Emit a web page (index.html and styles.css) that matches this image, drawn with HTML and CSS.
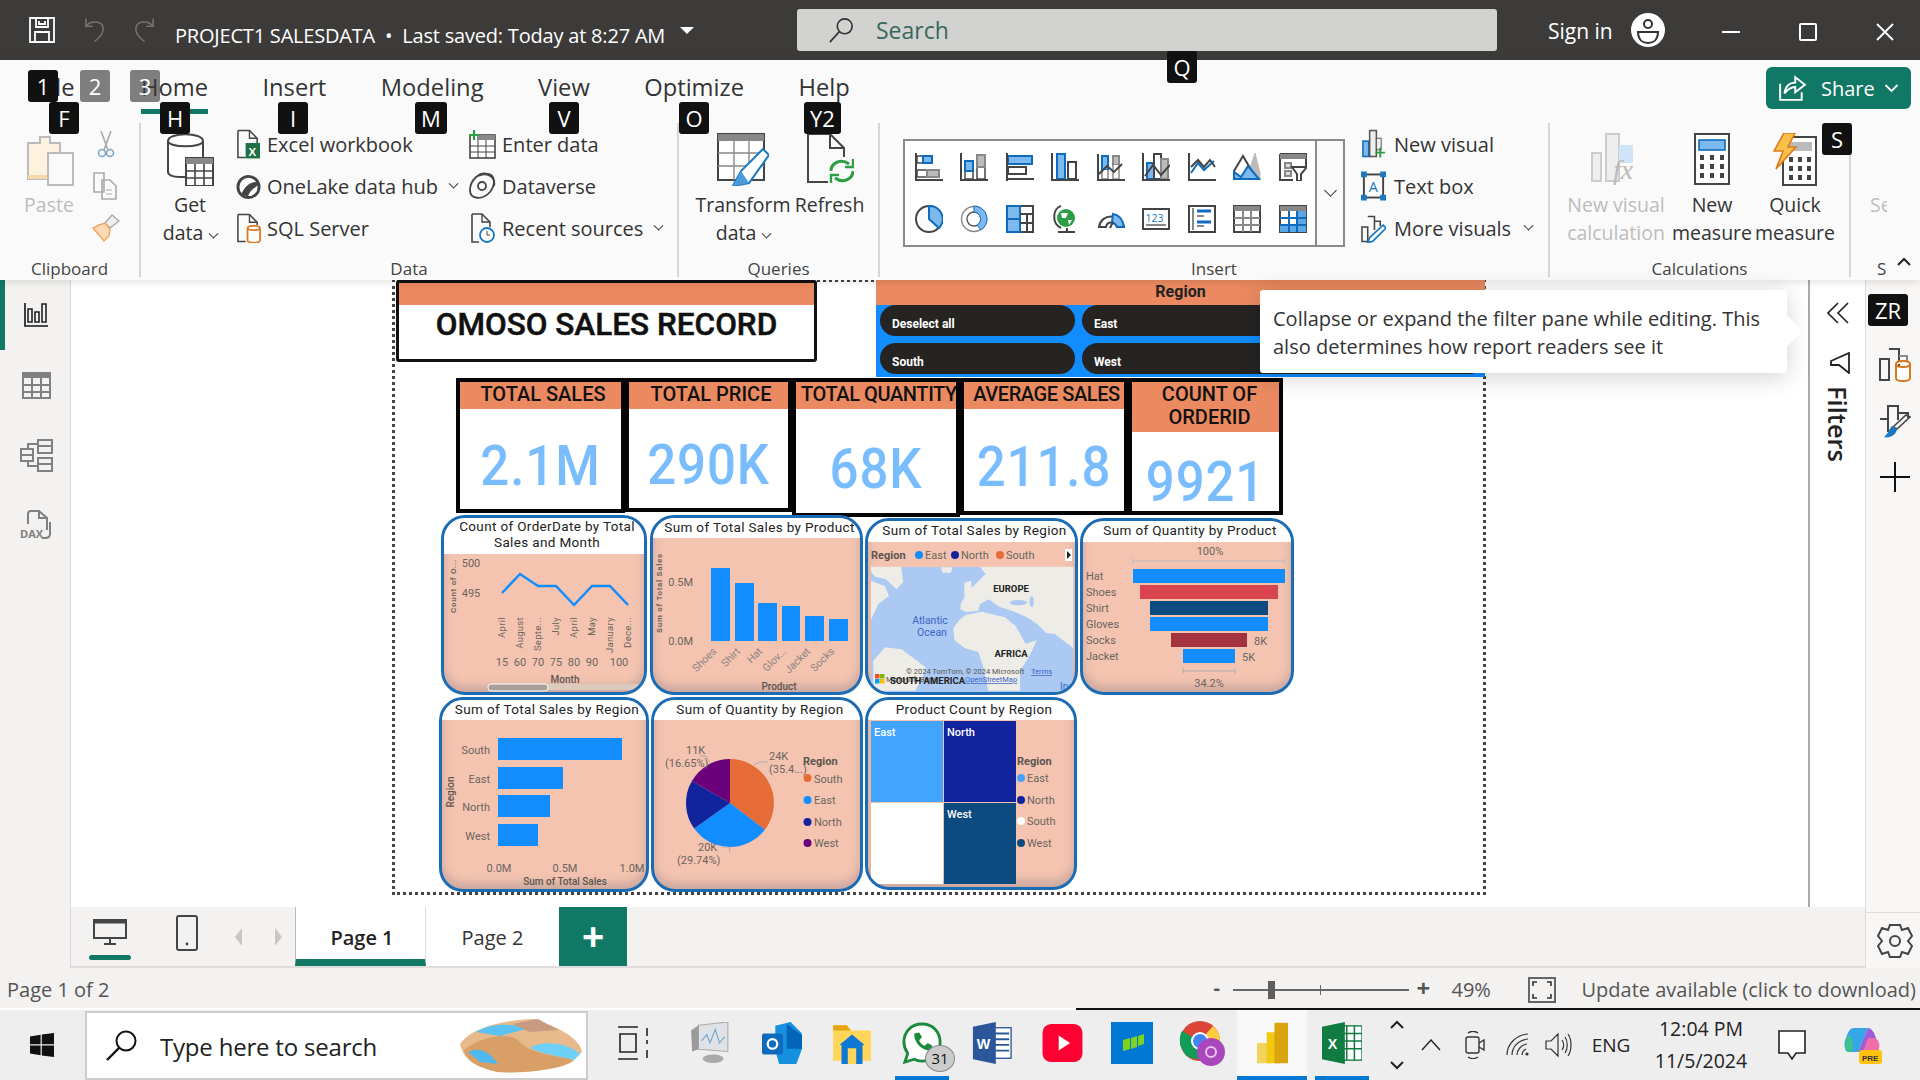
FILE: index.html
```html
<!DOCTYPE html>
<html lang="en">
<head>
<meta charset="utf-8">
<title>PROJECT1 SALESDATA</title>
<link rel="stylesheet" href="styles.css">
</head>
<body>
<div class="app">

<header class="titlebar">
  <svg class="ti-save" viewBox="0 0 26 26"><path d="M1 1H25V25H1Z M7 1V10H19V1 M6 25V15H20V25 M10 4V7H16V4" class="wline"/></svg>
  <svg class="ti-undo" viewBox="0 0 24 26"><path d="M3 1V9H10 M3 9C8 3 20 3 21 11C22 17 16 22 12 25" class="gline"/></svg>
  <svg class="ti-redo" viewBox="0 0 24 26"><path d="M21 1V9H14 M21 9C16 3 4 3 3 11C2 17 8 22 12 25" class="gline"/></svg>
  <div class="doc-title">PROJECT1 SALESDATA &nbsp;•&nbsp; Last saved: Today at 8:27 AM</div>
  <span class="caret"></span>
  <div class="searchbox">
    <svg class="ti-mag" viewBox="0 0 28 28"><circle cx="18" cy="10" r="8" class="dline"/><path d="M12 16L2 27" class="dline"/></svg>
    <span>Search</span>
  </div>
  <div class="signin">Sign in</div>
  <svg class="avatar" viewBox="0 0 34 34"><circle cx="17" cy="17" r="17" fill="#fff"/><circle cx="17" cy="11" r="4" fill="none" stroke="#333" stroke-width="2"/><path d="M7 19H27C27 27 22 30 17 30C12 30 7 27 7 19Z" fill="none" stroke="#333" stroke-width="2"/></svg>
  <div class="winbtns">
    <span class="win-min"></span>
    <span class="win-max"></span>
    <svg class="win-close" viewBox="0 0 18 18"><path d="M1 1L17 17M17 1L1 17" stroke="#fff" stroke-width="1.8"/></svg>
  </div>
</header>

<section class="ribbon">
  <nav class="tabs">
    <span class="tab tab-file">File</span>
    <span class="tab active">Home</span>
    <span class="tab">Insert</span>
    <span class="tab">Modeling</span>
    <span class="tab">View</span>
    <span class="tab">Optimize</span>
    <span class="tab">Help</span>
    <div class="share">
      <svg class="share-ic" viewBox="0 0 26 26"><path d="M2 9V24H22V17" class="wline"/><path d="M6 18C7 11 11 8 16 8V3L25 10L16 17V12C12 12 9 14 6 18Z" class="wline"/></svg>
      <span>Share</span>
      <svg class="share-chev" viewBox="0 0 14 10"><path d="M1 2L7 8L13 2" class="wline"/></svg>
    </div>
  </nav>
  <div class="groups">
    <div class="group g-clip">
      <div class="gbody clip-body">
        <div class="big muted big-paste">
          <svg class="ic-big" viewBox="0 0 50 53"><path d="M4 10H16V4H26V10H36V46H4Z" fill="#fdf2dd" stroke="#bbb" stroke-width="2"/><path d="M4 42H30V46H4Z" fill="#f5d8a8"/><rect x="24" y="20" width="25" height="32" fill="#fafafa" stroke="#bbb" stroke-width="2"/></svg>
          <span class="blabel">Paste</span>
        </div>
        <div class="clip-tools">
          <svg class="ic-s" viewBox="0 0 28 28"><path d="M9 1L16 20M19 1L12 20" stroke="#aaa" stroke-width="1.6" fill="none"/><circle cx="10" cy="23" r="3.5" fill="none" stroke="#7ba7cc" stroke-width="1.6"/><circle cx="18" cy="23" r="3.5" fill="none" stroke="#7ba7cc" stroke-width="1.6"/></svg>
          <svg class="ic-s" viewBox="0 0 28 28"><path d="M2 1H12V20H2Z M10 8H18L24 14V27H10Z" fill="#fafafa" stroke="#aaa" stroke-width="1.6"/><path d="M14 18H20M14 22H20" stroke="#aaa"/></svg>
          <svg class="ic-s" viewBox="0 0 28 28"><path d="M20 1L27 7L18 14L13 9Z" fill="#eee" stroke="#aaa" stroke-width="1.4"/><path d="M13 9L18 15L17 22L12 27C8 22 4 18 1 14L7 11Z" fill="#fcd9b0" stroke="#e8a868" stroke-width="1.4"/></svg>
        </div>
      </div>
      <div class="glabel">Clipboard</div>
    </div>

    <div class="group g-data">
      <div class="gbody data-body">
        <div class="big big-get">
          <svg class="ic-big" viewBox="0 0 50 53"><path d="M3 8C3 -1 38 -1 38 8V28H31V44H14C8 44 3 42 3 39Z" fill="#fff" stroke="#444" stroke-width="2"/><path d="M3 8C3 15 38 15 38 8" fill="none" stroke="#444" stroke-width="2"/><rect x="21" y="25" width="27" height="28" fill="#fff" stroke="#444" stroke-width="2"/><path d="M21 31H48V25H21Z" fill="#888"/><path d="M21 38H48M21 45H48M30 31V53M39 31V53" stroke="#444" stroke-width="1.6"/></svg>
          <span class="blabel">Get</span>
          <span class="blabel">data<i class="chev"></i></span>
        </div>
        <div class="smallcol col-a">
          <div class="row"><svg class="ic-row" viewBox="0 0 26 30"><path d="M2 1H14L22 9V14 M2 1V29H10" fill="none" stroke="#444" stroke-width="1.6"/><path d="M14 1V9H22" fill="none" stroke="#444" stroke-width="1.4"/><rect x="10" y="14" width="15" height="16" fill="#1e7145"/><text x="13" y="27" class="ic-x">X</text></svg>Excel workbook</div>
          <div class="row"><svg class="ic-row" viewBox="0 0 26 30"><circle cx="13" cy="16" r="11" fill="#fff" stroke="#444" stroke-width="3"/><path d="M6 24C10 13 18 10 24 12C22 16 14 18 12 26" fill="#444" stroke="#444" stroke-width="1"/></svg>OneLake data hub<i class="chev ml"></i></div>
          <div class="row"><svg class="ic-row" viewBox="0 0 26 30"><path d="M2 1H14L22 9V12 M2 1V29H10" fill="none" stroke="#444" stroke-width="1.6"/><path d="M14 1V9H22" fill="none" stroke="#444" stroke-width="1.4"/><path d="M12 15C12 12 25 12 25 15V28C25 31 12 31 12 28Z M12 15C12 18 25 18 25 15" fill="#fff" stroke="#d9781f" stroke-width="1.8"/></svg>SQL Server</div>
        </div>
        <div class="smallcol col-b">
          <div class="row"><svg class="ic-row ic-w" viewBox="0 0 28 30"><rect x="2" y="6" width="25" height="23" fill="#fff" stroke="#444" stroke-width="1.6"/><path d="M9 6H27V11H9Z" fill="#888"/><path d="M2 17H27M2 23H27M10 11V29M18 11V29" stroke="#444"/><path d="M6 1V11M1 6H11" stroke="#2e9e46" stroke-width="2.2"/></svg>Enter data</div>
          <div class="row"><svg class="ic-row ic-w" viewBox="0 0 28 30"><path d="M20 3C11 0 2 10 2 19C2 29 15 29 22 21C28 13 27 4 20 3Z" fill="none" stroke="#444" stroke-width="1.8"/><path d="M10 5C18 1 28 5 26 15" fill="none" stroke="#444" stroke-width="1.8"/><circle cx="14" cy="15" r="4" fill="none" stroke="#444" stroke-width="1.8"/></svg>Dataverse</div>
          <div class="row"><svg class="ic-row ic-w" viewBox="0 0 28 30"><path d="M4 1H14L22 9V14 M4 1V29H11" fill="none" stroke="#444" stroke-width="1.6"/><path d="M14 1V9H22" fill="none" stroke="#444" stroke-width="1.4"/><circle cx="19" cy="22" r="7" fill="#fff" stroke="#1a78c2" stroke-width="1.8"/><path d="M19 18V22H22" fill="none" stroke="#444"/></svg>Recent sources<i class="chev ml"></i></div>
        </div>
      </div>
      <div class="glabel">Data</div>
    </div>

    <div class="group g-query">
      <div class="gbody query-body">
        <div class="big big-trans">
          <svg class="ic-big" viewBox="0 0 52 53"><rect x="1" y="1" width="46" height="46" fill="#fff" stroke="#444" stroke-width="2"/><rect x="1" y="1" width="46" height="7" fill="#888"/><path d="M1 20H47M1 33H47M17 8V47M32 8V47" stroke="#888" stroke-width="1.4"/><path d="M46 16L52 22L32 50L16 53L24 38Z" fill="#fff" stroke="#1a78c2" stroke-width="2"/><path d="M16 53L24 38L32 50Z" fill="#4a9ddd"/></svg>
          <span class="blabel">Transform</span>
          <span class="blabel">data<i class="chev"></i></span>
        </div>
        <div class="big big-ref">
          <svg class="ic-big" viewBox="0 0 48 53"><path d="M2 1H24L38 15V24 M2 1V49H22" fill="none" stroke="#444" stroke-width="2"/><path d="M24 1V15H38" fill="none" stroke="#444" stroke-width="2"/><path d="M25 38C25 30 35 25 43 31M47 38C47 46 37 51 29 45" fill="none" stroke="#2e9e46" stroke-width="3"/><path d="M39 34H47V26M33 42H25V50" fill="none" stroke="#2e9e46" stroke-width="2.4"/></svg>
          <span class="blabel">Refresh</span>
        </div>
      </div>
      <div class="glabel">Queries</div>
    </div>

    <div class="group g-insert">
      <div class="gbody insert-body">
        <div class="gallery">
          <div class="gal-grid">
            <svg class="gi" viewBox="0 0 28 28"><rect x="2" y="3" width="6" height="7" class="w"/><rect x="8" y="3" width="9" height="7" class="b"/><rect x="2" y="17" width="10" height="7" class="w"/><rect x="12" y="17" width="12" height="7" class="g"/><path d="M1 0V27H28" class="d"/></svg>
            <svg class="gi" viewBox="0 0 28 28"><rect x="5" y="16" width="8" height="10" class="w"/><rect x="5" y="8" width="8" height="10" class="b"/><rect x="17" y="14" width="8" height="12" class="w"/><rect x="17" y="2" width="8" height="12" class="g"/><path d="M1 0V27H28" class="d"/></svg>
            <svg class="gi" viewBox="0 0 28 28"><rect x="2" y="3" width="24" height="8" class="b"/><rect x="2" y="14" width="18" height="7" class="w2"/><path d="M1 0V28 M1 26H28" class="d"/></svg>
            <svg class="gi" viewBox="0 0 28 28"><rect x="6" y="1" width="8" height="25" class="b"/><rect x="17" y="9" width="8" height="17" class="w2"/><path d="M1 0V27H28" class="d"/></svg>
            <svg class="gi" viewBox="0 0 28 28"><rect x="5" y="3" width="6" height="14" class="b"/><rect x="16" y="3" width="6" height="9" class="g"/><path d="M5 17V26H11V17M16 12V26H22V12" class="w3"/><path d="M1 1V27H28" class="d"/><path d="M2 21L10 13L17 19L25 11" class="d"/></svg>
            <svg class="gi" viewBox="0 0 28 28"><rect x="5" y="10" width="7" height="16" class="b"/><rect x="12" y="1" width="7" height="25" class="w2"/><rect x="19" y="6" width="7" height="20" class="g"/><path d="M1 0V27H28" class="d"/><path d="M3 23L11 12L19 22L28 12" class="d"/></svg>
            <svg class="gi" viewBox="0 0 28 28"><path d="M3 20L10 10L16 17L26 8" fill="none" stroke="#0f6cbd" stroke-width="2"/><path d="M3 14L10 7L16 14L22 7L27 14" class="d"/><path d="M1 0V27H28" class="d"/></svg>
            <svg class="gi" viewBox="0 0 28 28"><path d="M17 15L22 0L27 20V26H17Z" fill="#bbb" stroke="#bbb"/><path d="M1 18L10 3L17 15L24 26H1Z" fill="#fff" stroke="#444" stroke-width="2"/><path d="M1 26V19L8 24L15 13L26 26Z" fill="#7db9ec" stroke="#0f6cbd" stroke-width="2"/></svg>
            <svg class="gi" viewBox="0 0 28 28"><path d="M1 1H27V14 M1 1V27H14" class="d"/><rect x="1" y="1" width="26" height="5" fill="#888"/><path d="M6 10H12V15H6Z M6 18H12V23H6Z" fill="#ddd" stroke="#888" stroke-width="2"/><path d="M13 14H28L22 21V28H18V21Z" fill="#fff" stroke="#444" stroke-width="2"/></svg>

            <svg class="gi" viewBox="0 0 28 28"><circle cx="14" cy="14" r="13" fill="#fafafa" stroke="#444" stroke-width="2"/><path d="M14 1A13 13 0 0 1 24 23L14 14Z" fill="#7db9ec" stroke="#0f6cbd" stroke-width="2"/></svg>
            <svg class="gi" viewBox="0 0 28 28"><circle cx="14" cy="14" r="12.5" fill="#fff" stroke="#888" stroke-width="1.4"/><circle cx="14" cy="14" r="7" fill="#fff" stroke="#555" stroke-width="1.4"/><path d="M14 1A13 13 0 0 1 21 25L17 20A7 7 0 0 0 14 7Z" fill="#7db9ec" stroke="#0f6cbd"/></svg>
            <svg class="gi" viewBox="0 0 28 28"><rect x="1" y="1" width="26" height="26" fill="#fff" stroke="#444" stroke-width="2"/><rect x="1" y="1" width="13" height="13" class="b"/><rect x="1" y="14" width="13" height="13" class="b"/><path d="M14 9H27M21 9V27M14 18H27" stroke="#444" stroke-width="2"/></svg>
            <svg class="gi" viewBox="0 0 28 28"><circle cx="15" cy="13" r="9" fill="#2e9e46"/><path d="M10 8H17L15 13L11 13Z M17 15H21L18 20Z" fill="#fff"/><path d="M10 1C2 3 0 18 10 23M16 23V27M7 27H24" fill="none" stroke="#444" stroke-width="2"/></svg>
            <svg class="gi" viewBox="0 0 28 28"><path d="M2 22C4 8 24 8 27 22H20C18 16 10 16 9 22Z" fill="#fff" stroke="#444" stroke-width="2"/><path d="M16 9C22 10 26 15 27 22H20C19 19 17 18 15 17Z" fill="#7db9ec" stroke="#0f6cbd" stroke-width="2"/><path d="M13 23L16 17" stroke="#444" stroke-width="2"/></svg>
            <svg class="gi" viewBox="0 0 28 28"><rect x="1" y="4" width="26" height="20" fill="#fff" stroke="#444" stroke-width="2"/><text x="3.5" y="17" class="ic-123">123</text><path d="M4 20H24" stroke="#888" stroke-width="2"/></svg>
            <svg class="gi" viewBox="0 0 28 28"><rect x="1" y="1" width="26" height="26" fill="#fff" stroke="#444" stroke-width="2"/><path d="M5 3V25" stroke="#888" stroke-width="2"/><path d="M9 6H23M9 17H23" stroke="#0f6cbd" stroke-width="3"/><path d="M9 11H16M9 21H16" stroke="#888" stroke-width="2"/></svg>
            <svg class="gi" viewBox="0 0 28 28"><rect x="1" y="1" width="26" height="26" fill="#fff" stroke="#444" stroke-width="2"/><rect x="1" y="1" width="26" height="5" fill="#888"/><path d="M1 13H27M1 20H27M10 6V27M18 6V27" stroke="#888" stroke-width="2"/></svg>
            <svg class="gi" viewBox="0 0 28 28"><rect x="1" y="1" width="26" height="26" fill="#fff" stroke="#444" stroke-width="2"/><rect x="1" y="1" width="26" height="5" fill="#888"/><rect x="18" y="6" width="9" height="21" fill="#5ba7e6"/><rect x="1" y="20" width="26" height="7" fill="#5ba7e6"/><path d="M1 13H27M1 20H27M10 6V27M18 6V27" stroke="#0f6cbd" stroke-width="2"/></svg>
          </div>
          <div class="gal-more"><i class="chev big-chev"></i></div>
        </div>
        <div class="smallcol col-c">
          <div class="row"><svg class="ic-row" viewBox="0 0 26 30"><rect x="2" y="12" width="6" height="16" fill="#7db9ec" stroke="#0f6cbd" stroke-width="1.6"/><rect x="9" y="1" width="7" height="27" fill="#eee" stroke="#555" stroke-width="1.6"/><rect x="16" y="9" width="5" height="12" fill="#eee" stroke="#555"/><path d="M20 19V29M15 24H25" stroke="#2e9e46" stroke-width="2"/></svg>New visual</div>
          <div class="row"><svg class="ic-row" viewBox="0 0 26 30"><rect x="3" y="3" width="20" height="24" fill="none" stroke="#444" stroke-width="2"/><path d="M0 0H6V6H0Z M20 0H26V6H20Z M0 24H6V30H0Z M20 24H26V30H20Z" fill="#1a78c2"/><text x="8" y="21" class="ic-a">A</text></svg>Text box</div>
          <div class="row"><svg class="ic-row" viewBox="0 0 26 30"><path d="M1 14H7V29H1Z M7 3H14V17 M14 8H20V13" fill="none" stroke="#444" stroke-width="1.6"/><path d="M23 12L26 15L12 29L7 30L9 25Z" fill="#fff" stroke="#1a78c2" stroke-width="1.8"/></svg>More visuals<i class="chev ml"></i></div>
        </div>
      </div>
      <div class="glabel">Insert</div>
    </div>

    <div class="group g-calc">
      <div class="gbody calc-body">
        <div class="big muted big-nvc">
          <svg class="ic-big" viewBox="0 0 50 53"><path d="M1 20H10V48H1Z M15 1H28V48H15Z" fill="#eee" stroke="#ccc" stroke-width="2"/><rect x="28" y="12" width="14" height="18" fill="#cfe4f7"/><text x="22" y="46" class="ic-fx">fx</text></svg>
          <span class="blabel">New visual</span>
          <span class="blabel">calculation</span>
        </div>
        <div class="big big-nm">
          <svg class="ic-big" viewBox="0 0 36 53"><rect x="1" y="1" width="34" height="50" fill="#fff" stroke="#444" stroke-width="2"/><rect x="5" y="7" width="26" height="10" fill="#7db9ec" stroke="#0f6cbd" stroke-width="1.6"/><path d="M6 22H10V27H6Z M16 22H20V27H16Z M26 22H30V27H26Z M6 31H10V36H6Z M16 31H20V36H16Z M26 31H30V36H26Z M6 40H10V45H6Z M16 40H20V45H16Z M26 40H30V45H26Z" fill="#444"/></svg>
          <span class="blabel">New</span>
          <span class="blabel">measure</span>
        </div>
        <div class="big big-qm">
          <svg class="ic-big" viewBox="0 0 44 53"><rect x="10" y="4" width="33" height="48" fill="#fff" stroke="#444" stroke-width="2"/><rect x="14" y="9" width="25" height="9" fill="#bbb"/><path d="M16 24H20V29H16Z M25 24H29V29H25Z M34 24H38V29H34Z M16 33H20V38H16Z M25 33H29V38H25Z M34 33H38V38H34Z M16 42H20V47H16Z M25 42H29V47H25Z M34 42H38V47H34Z" fill="#444"/><path d="M11 0H22L15 14H23L3 36L10 18H1Z" fill="#f7c04a" stroke="#e07b1a" stroke-width="1.6"/></svg>
          <span class="blabel">Quick</span>
          <span class="blabel">measure</span>
        </div>
      </div>
      <div class="glabel">Calculations</div>
    </div>

    <div class="group g-sens">
      <div class="gbody sens-body"><span class="blabel sens-text">Se</span></div>
      <div class="glabel sens-label">S</div>
      <svg class="collapse" viewBox="0 0 14 10"><path d="M1 8L7 2L13 8" fill="none" stroke="#222" stroke-width="2"/></svg>
    </div>
  </div>
</section>

<main class="mainrow">
  <aside class="leftnav">
    <div class="ln-item ln-active"><svg class="ln-ic" viewBox="0 0 24 24"><path d="M1 0V23H24" fill="none" stroke="#111" stroke-width="1.6"/><path d="M4 6H8V19H4Z M11 9H15V19H11Z M18 1H22V19H18Z" fill="none" stroke="#222" stroke-width="1.6"/></svg></div>
    <div class="ln-item"><svg class="ln-ic2" viewBox="0 0 29 27"><rect x="1" y="1" width="27" height="25" fill="none" stroke="#808080" stroke-width="2"/><rect x="1" y="1" width="27" height="5" fill="#808080"/><path d="M1 13H28M1 20H28M10 6V26M19 6V26" stroke="#808080" stroke-width="2"/></svg></div>
    <div class="ln-item"><svg class="ln-ic3" viewBox="0 0 33 33"><rect x="1" y="10" width="12" height="12" fill="none" stroke="#808080" stroke-width="2"/><rect x="18" y="1" width="14" height="13" fill="none" stroke="#808080" stroke-width="2"/><rect x="18" y="19" width="14" height="13" fill="none" stroke="#808080" stroke-width="2"/><path d="M1 16H13M18 7H32M18 25H32M13 16H8 M8 10V5H18 M8 22V27H18" fill="none" stroke="#808080" stroke-width="2"/></svg></div>
    <div class="ln-item"><svg class="ln-ic4" viewBox="0 0 32 30"><path d="M8 14V4C8 2 9 1 11 1H19L27 8V20" fill="none" stroke="#808080" stroke-width="2"/><path d="M19 1V8H27" fill="none" stroke="#808080" stroke-width="2"/><path d="M30 12V24C30 27 28 28 25 28H22" fill="none" stroke="#808080" stroke-width="2"/><text x="0" y="28" class="ic-dax">DAX</text></svg></div>
  </aside>

  <div class="centercol">
    <div class="workspace">
      <div class="canvas">
        <div class="pbtitle">
          <div class="pbtitle-top"></div>
          <div class="pbtitle-text">OMOSO SALES RECORD</div>
        </div>

        <div class="slicer">
          <div class="slicer-head">Region</div>
          <div class="slicer-grid">
            <span class="pill">Deselect all</span>
            <span class="pill">East</span>
            <span class="pill">South</span>
            <span class="pill">West</span>
          </div>
        </div>

        <div class="kpi k1"><div class="kpi-head">TOTAL SALES</div><div class="kpi-val">2.1M</div></div>
        <div class="kpi k2"><div class="kpi-head">TOTAL PRICE</div><div class="kpi-val">290K</div></div>
        <div class="kpi k3"><div class="kpi-head k-tight">TOTAL QUANTITY</div><div class="kpi-val val-low">68K</div></div>
        <div class="kpi k4"><div class="kpi-head k-tight">AVERAGE SALES</div><div class="kpi-val">211.8</div></div>
        <div class="kpi k5"><div class="kpi-head kpi-head2">COUNT OF ORDERID</div><div class="kpi-val val-s">9921</div></div>

        <div class="vis v1">
          <div class="vis-title vt-2">Count of OrderDate by Total Sales and Month</div>
          <svg width="200" height="138" viewBox="444 554 200 138">
            <text x="456" y="586" transform="rotate(-90 456 586)" class="ax-b c">Count of O...</text>
            <text x="471" y="567" class="ax c">500</text>
            <text x="471" y="597" class="ax c">495</text>
            <polyline points="502,593 520,574 538,586 556,586 574,605 592,586 610,586 628,605" class="line"/>
            <g class="ax-w">
              <text x="505" y="617" transform="rotate(-90 505 617)">April</text>
              <text x="523" y="617" transform="rotate(-90 523 617)">August</text>
              <text x="541" y="617" transform="rotate(-90 541 617)">Septe...</text>
              <text x="559" y="617" transform="rotate(-90 559 617)">July</text>
              <text x="577" y="617" transform="rotate(-90 577 617)">April</text>
              <text x="595" y="617" transform="rotate(-90 595 617)">May</text>
              <text x="613" y="617" transform="rotate(-90 613 617)">January</text>
              <text x="631" y="617" transform="rotate(-90 631 617)">Dece...</text>
            </g>
            <g class="ax c">
              <text x="502" y="666">15</text><text x="520" y="666">60</text><text x="538" y="666">70</text><text x="556" y="666">75</text><text x="574" y="666">80</text><text x="592" y="666">90</text><text x="619" y="666">100</text>
            </g>
            <text x="565" y="683" class="ax-t c">Month</text>
            <rect x="548" y="684" width="92" height="6" fill="#dccabf"/>
            <rect x="488" y="684" width="60" height="7" rx="3" fill="#a8a09a" stroke="#fff"/>
          </svg>
        </div>

        <div class="vis v2">
          <div class="vis-title">Sum of Total Sales by Product</div>
          <svg width="207" height="154" viewBox="653 538 207 154">
            <text x="662" y="593" transform="rotate(-90 662 593)" class="ax-b c">Sum of Total Sales</text>
            <text x="693" y="586" class="ax e">0.5M</text>
            <text x="693" y="645" class="ax e">0.0M</text>
            <g fill="#118dff">
              <rect x="711" y="568" width="19" height="73"/><rect x="735" y="583" width="19" height="58"/><rect x="758" y="603" width="19" height="38"/><rect x="782" y="606" width="18" height="35"/><rect x="805" y="616" width="19" height="25"/><rect x="829" y="619" width="19" height="22"/>
            </g>
            <g class="ax e ax-o">
              <text x="717" y="652" transform="rotate(-45 717 652)">Shoes</text>
              <text x="741" y="652" transform="rotate(-45 741 652)">Shirt</text>
              <text x="763" y="652" transform="rotate(-45 763 652)">Hat</text>
              <text x="787" y="652" transform="rotate(-45 787 652)">Glov...</text>
              <text x="811" y="652" transform="rotate(-45 811 652)">Jacket</text>
              <text x="835" y="652" transform="rotate(-45 835 652)">Socks</text>
            </g>
            <text x="779" y="690" class="ax-t c">Product</text>
          </svg>
        </div>

        <div class="vis v3">
          <div class="vis-title">Sum of Total Sales by Region</div>
          <svg width="207" height="150" viewBox="868 542 207 150">
            <text x="871" y="559" class="ax-t2">Region</text>
            <circle cx="919" cy="555" r="4" fill="#118dff"/><text x="925" y="559" class="ax">East</text>
            <circle cx="955" cy="555" r="4" fill="#12239e"/><text x="961" y="559" class="ax">North</text>
            <circle cx="1000" cy="555" r="4" fill="#e66c37"/><text x="1006" y="559" class="ax">South</text>
            <rect x="1065" y="549" width="7" height="12" fill="#fff"/><path d="M1067 551L1071 555L1067 559Z" fill="#222"/>
            <rect x="871" y="567" width="202" height="125" fill="#abc9f2"/>
            <g transform="translate(865 560) scale(.3333)" fill="#eeece7">
              <path d="M18 20H108L115 65L95 88L62 58L30 50L18 35Z"/>
              <path d="M18 62L60 78L72 108L40 132L18 180Z"/>
              <path d="M228 22L262 22L258 38L232 38Z"/>
              <path d="M298 68L318 62L322 98L298 108Z"/>
              <path d="M288 130L305 100L335 68L362 42L345 20H625V265L590 238L570 222L545 220L516 192L486 172L440 152L402 140L372 118L345 132L340 152L302 156L286 148Z"/>
              <path d="M285 178L302 165L350 155L392 165L420 172L452 198L482 252L516 240L492 290L465 332L465 392H370L355 322L340 276L300 265L268 240L265 205Z"/>
              <path d="M25 302L60 262L110 268L182 322L170 360L150 392H25Z"/>
            </g>
            <g transform="translate(865 560) scale(.3333)" fill="#abc9f2">
              <ellipse cx="460" cy="128" rx="26" ry="8"/>
              <ellipse cx="500" cy="125" rx="6" ry="16"/>
              <path d="M440 175L452 178L485 240L478 242Z"/>
              <path d="M495 185L532 208L520 212L498 195Z"/>
            </g>
            <text x="1011" y="592" class="map-b c">EUROPE</text>
            <text x="1011" y="657" class="map-b c">AFRICA</text>
            <text x="930" y="624" class="map-o c">Atlantic</text>
            <text x="932" y="636" class="map-o c">Ocean</text>
            <text x="906" y="674" class="map-c">© 2024 TomTom, © 2024 Microsoft</text>
            <text x="1031" y="674" class="map-c map-l">Terms</text>
            <g><rect x="875" y="674" width="4.5" height="4.5" fill="#f25022"/><rect x="880" y="674" width="4.5" height="4.5" fill="#7fba00"/><rect x="875" y="679" width="4.5" height="4.5" fill="#00a4ef"/><rect x="880" y="679" width="4.5" height="4.5" fill="#ffb900"/></g>
            <text x="886" y="682" class="map-c">Microsoft Bing</text>
            <text x="965" y="682" class="map-c map-l">OpenStreetMap</text>
            <text x="890" y="684" class="map-b">SOUTH AMERICA</text>
            <text x="1060" y="690" class="map-i">Ind</text>
          </svg>
        </div>

        <div class="vis v4">
          <div class="vis-title">Sum of Quantity by Product</div>
          <svg width="208" height="150" viewBox="1083 542 208 150">
            <text x="1210" y="555" class="ax c">100%</text>
            <path d="M1133 558V564M1285 558V564M1133 561H1285" stroke="#bbb" fill="none"/>
            <rect x="1133" y="569" width="152" height="14" fill="#118dff"/>
            <rect x="1140" y="585" width="138" height="14" fill="#d9444f"/>
            <rect x="1150" y="601" width="118" height="14" fill="#0d4a80"/>
            <rect x="1150" y="617" width="118" height="14" fill="#118dff"/>
            <rect x="1171" y="633" width="76" height="14" fill="#a4323f"/>
            <rect x="1183" y="649" width="52" height="14" fill="#118dff"/>
            <g class="ax"><text x="1086" y="580">Hat</text><text x="1086" y="596">Shoes</text><text x="1086" y="612">Shirt</text><text x="1086" y="628">Gloves</text><text x="1086" y="644">Socks</text><text x="1086" y="660">Jacket</text></g>
            <text x="1254" y="645" class="ax">8K</text>
            <text x="1242" y="661" class="ax">5K</text>
            <path d="M1183 668V674M1235 668V674M1183 671H1235" stroke="#aaa" fill="none"/>
            <text x="1209" y="687" class="ax c">34.2%</text>
          </svg>
        </div>

        <div class="vis v5">
          <div class="vis-title">Sum of Total Sales by Region</div>
          <svg width="204" height="169" viewBox="442 720 204 169">
            <text x="454" y="792" transform="rotate(-90 454 792)" class="ax-t c">Region</text>
            <g fill="#118dff"><rect x="498" y="738" width="124" height="22"/><rect x="498" y="767" width="65" height="22"/><rect x="498" y="795" width="52" height="22"/><rect x="498" y="824" width="40" height="22"/></g>
            <g class="ax e"><text x="490" y="754">South</text><text x="490" y="783">East</text><text x="490" y="811">North</text><text x="490" y="840">West</text></g>
            <g class="ax c"><text x="499" y="872">0.0M</text><text x="565" y="872">0.5M</text><text x="632" y="872">1.0M</text></g>
            <text x="565" y="885" class="ax-t c">Sum of Total Sales</text>
          </svg>
        </div>

        <div class="vis v6">
          <div class="vis-title">Sum of Quantity by Region</div>
          <svg width="206" height="169" viewBox="654 720 206 169">
            <path d="M730 803V759A44 44 0 0 1 764.9 829.7Z" fill="#e66c37"/>
            <path d="M730 803L764.9 829.7A44 44 0 0 1 694.2 828.6Z" fill="#118dff"/>
            <path d="M730 803L694.2 828.6A44 44 0 0 1 691.9 781Z" fill="#12239e"/>
            <path d="M730 803L691.9 781A44 44 0 0 1 730 759Z" fill="#6b007b"/>
            <path d="M754 765L760 762H768 M709 761L706 756H700 M722 847H729L730 852" stroke="#aaa" fill="none"/>
            <g class="ax"><text x="769" y="760">24K</text><text x="769" y="773">(35.4...)</text><text x="686" y="754">11K</text><text x="665" y="767">(16.65%)</text><text x="698" y="851">20K</text><text x="677" y="864">(29.74%)</text></g>
            <text x="803" y="765" class="ax-t2">Region</text>
            <circle cx="807.500" cy="778" r="4" fill="#e66c37"/><circle cx="807.500" cy="800" r="4" fill="#118dff"/><circle cx="807.500" cy="822" r="4" fill="#12239e"/><circle cx="807.500" cy="843" r="4" fill="#6b007b"/>
            <g class="ax"><text x="814" y="783">South</text><text x="814" y="804">East</text><text x="814" y="826">North</text><text x="814" y="847">West</text></g>
          </svg>
        </div>

        <div class="vis v7">
          <div class="vis-title">Product Count by Region</div>
          <svg width="206" height="167" viewBox="868 720 206 167">
            <rect x="871" y="721" width="72" height="81" fill="#41a4ff"/>
            <rect x="871" y="803" width="72" height="81" fill="#fff"/>
            <rect x="944" y="721" width="72" height="81" fill="#12239e"/>
            <rect x="944" y="803" width="72" height="81" fill="#0d4a80"/>
            <g class="tm"><text x="874" y="736">East</text><text x="947" y="736">North</text><text x="947" y="818">West</text></g>
            <text x="1017" y="765" class="ax-t2">Region</text>
            <circle cx="1021" cy="778" r="4" fill="#41a4ff"/><circle cx="1021" cy="800" r="4" fill="#12239e"/><circle cx="1021" cy="821" r="4" fill="#fff"/><circle cx="1021" cy="843" r="4" fill="#0d4a80"/>
            <g class="ax"><text x="1027" y="782">East</text><text x="1027" y="804">North</text><text x="1027" y="825">South</text><text x="1027" y="847">West</text></g>
          </svg>
        </div>
      </div>

      <div class="tooltip">Collapse or expand the filter pane while editing. This also determines how report readers see it</div>

      <aside class="filters">
        <svg class="f-chev" viewBox="0 0 22 22"><path d="M11 1L1 11L11 21M21 1L11 11L21 21" fill="none" stroke="#222" stroke-width="1.6"/></svg>
        <svg class="f-funnel" viewBox="0 0 20 22"><path d="M1 9L19 1V21L9 13H1Z" fill="none" stroke="#222" stroke-width="1.8"/></svg>
        <div class="f-text">Filters</div>
      </aside>
    </div>

    <div class="pagebar">
      <div class="pb-device pb-on"><svg class="dev-ic" viewBox="0 0 34 26"><rect x="1" y="1" width="32" height="18" fill="none" stroke="#444" stroke-width="2"/><path d="M1 3H33" stroke="#444" stroke-width="3"/><path d="M17 19V25M11 25H23" stroke="#444" stroke-width="2"/></svg></div>
      <div class="pb-device pb-phone"><svg class="ph-ic" viewBox="0 0 22 36"><rect x="1" y="1" width="20" height="34" rx="2" fill="none" stroke="#444" stroke-width="2"/><circle cx="11" cy="29" r="1.400" fill="#444"/></svg></div>
      <div class="pb-arrows"><span class="arr-l"></span><span class="arr-r"></span></div>
      <div class="ptab ptab-on">Page 1</div>
      <div class="ptab">Page 2</div>
      <div class="ptab-add">+</div>
    </div>
  </div>

  <aside class="rightnav">
    <svg class="rn-ic" viewBox="0 0 32 34"><path d="M1 11H10V32H1Z M10 1H20V20" fill="none" stroke="#444" stroke-width="2"/><path d="M20 8H28V14" fill="none" stroke="#888" stroke-width="2"/><path d="M17 16C17 12 31 12 31 16V30C31 34 17 34 17 30Z M17 16C17 20 31 20 31 16" fill="#fff" stroke="#d9781f" stroke-width="2"/></svg>
    <svg class="rn-ic" viewBox="0 0 32 34"><path d="M1 14H9V27 M9 14V1H19V15 M19 8H29V13" fill="none" stroke="#444" stroke-width="2"/><path d="M31 12L18 24L14 22L27 10Z" fill="none" stroke="#444" stroke-width="1.6"/><path d="M5 32C10 33 17 31 18 24L13 21C10 24 9 29 5 32Z" fill="#1a78c2"/></svg>
    <svg class="rn-plus" viewBox="0 0 30 30"><path d="M15 0V30M0 15H30" stroke="#111" stroke-width="2"/></svg>
    <div class="rn-gear">
      <svg class="gear" viewBox="0 0 36 34"><path d="M13 1H23L25 6L31 4L35 12L31 17L35 22L31 30L25 28L23 33H13L11 28L5 30L1 22L5 17L1 12L5 4L11 6Z" fill="none" stroke="#444" stroke-width="2"/><circle cx="18" cy="17" r="5" fill="none" stroke="#444" stroke-width="2"/></svg>
    </div>
  </aside>
</main>

<footer class="statusbar">
  <span class="st-page">Page 1 of 2</span>
  <div class="st-zoom">
    <span class="z-minus">-</span>
    <div class="z-slider"><span class="z-thumb"></span><span class="z-tick"></span></div>
    <span class="z-plus">+</span>
  </div>
  <span class="st-pct">49%</span>
  <svg class="st-fit" viewBox="0 0 28 26"><rect x="1" y="1" width="26" height="24" fill="#f3f2f1" stroke="#666" stroke-width="2"/><path d="M5 9V5H9M19 5H23V9M23 17V21H19M9 21H5V17" fill="none" stroke="#333" stroke-width="1.6"/></svg>
  <span class="st-update">Update available (click to download)</span>
</footer>

<div class="taskbar">
  <div class="tb-start"><svg class="winlogo" viewBox="0 0 24 24"><path d="M0 3.400L10.600 1.800V11.300H0Z M11.800 1.600L24 0V11.300H11.800Z M0 12.500H10.600V22.200L0 20.600Z M11.800 12.500H24V24L11.800 22.400Z" fill="#111"/></svg></div>
  <div class="tb-search">
    <svg class="tb-mag" viewBox="0 0 33 31"><circle cx="21" cy="11" r="9.500" fill="none" stroke="#111" stroke-width="2"/><path d="M14 18L2 30" stroke="#111" stroke-width="2.400"/></svg>
    <span class="tb-stext">Type here to search</span>
    <svg class="tb-dune" viewBox="0 0 124 56"><path d="M2 26C14 8 50 2 76 1C98 8 122 20 124 34C110 50 70 56 40 54C22 50 6 44 2 26Z" fill="#e8b98a"/><path d="M18 14C34 4 54 6 72 10L42 18Z" fill="#5bc3f2"/><path d="M6 32C24 18 48 14 60 22C72 36 92 36 116 42C110 50 70 56 40 54C22 50 8 44 6 32Z" fill="#d8a066"/><path d="M10 34C22 28 32 34 40 46L22 44Z" fill="#4fb8ee"/><path d="M72 30C82 22 110 24 122 36L116 42C100 38 84 36 72 30Z" fill="#6fd0f7"/><path d="M54 6L80 1L100 12L72 14Z" fill="#c89a82"/></svg>
  </div>
  <div class="tbi tbi-tv"><svg class="tb-ic" viewBox="0 0 30 34"><path d="M0 1H20M0 33H20M2 8H18V26H2Z" fill="none" stroke="#222" stroke-width="1.6"/><path d="M29 2V10M29 14V18M29 24V32" stroke="#222" stroke-width="1.6"/></svg></div>
  <div class="tbi tbi-mon"><svg class="tb-ic tb-ic-w" viewBox="0 0 38 40"><path d="M8 3L36 0V28L8 26Z" fill="#dfe3e8" stroke="#aaa"/><path d="M11 18L16 12L19 20L24 7L28 20L33 14" fill="none" stroke="#6fa4cf"/><path d="M1 8L8 3V26L2 28Z" fill="#9a9a9a"/><ellipse cx="22" cy="35" rx="10" ry="4" fill="#aaa"/></svg></div>
  <div class="tbi"><svg class="tb-ic tb-ic-w" viewBox="0 0 42 44"><path d="M14 4L30 0L42 12V28L36 44H18L14 30Z" fill="#1490df"/><path d="M26 2L42 14V28H26Z" fill="#0364b8"/><rect x="0" y="12" width="22" height="22" rx="2" fill="#0f6cbd"/><circle cx="11" cy="23" r="5" fill="none" stroke="#fff" stroke-width="2.400"/></svg></div>
  <div class="tbi"><svg class="tb-ic tb-ic-w" viewBox="0 0 38 40"><path d="M1 3H14L18 8H37V37H1Z" fill="#ffd659"/><path d="M1 3H14L18 8H1Z" fill="#e8a40e"/><rect x="9" y="20" width="20" height="20" fill="#0f78d4"/><path d="M7 22L19 12L31 22H26V32H12V22Z" fill="#0f78d4"/><rect x="15" y="25" width="8" height="15" fill="#ffd659"/></svg></div>
  <div class="tbi tbi-on"><svg class="tb-ic tb-ic-w" viewBox="0 0 42 44"><path d="M21 2C9 2 2 11 2 21C2 26 4 30 6 33L3 42L13 39C16 41 18 41 21 41C33 41 40 32 40 21C40 11 33 2 21 2Z" fill="#fff" stroke="#1c8a3c" stroke-width="3"/><path d="M13 12C12 20 20 30 30 30L32 25L27 22L24 25C21 24 19 22 18 19L21 16L18 11Z" fill="#1c8a3c"/></svg><span class="tb-badge">31</span></div>
  <div class="tbi"><svg class="tb-ic tb-ic-w" viewBox="0 0 40 44"><rect x="14" y="6" width="26" height="32" fill="#fff" stroke="#2b579a" stroke-width="1.4"/><path d="M20 12H38M20 18H38M20 24H38M20 30H38" stroke="#2b579a" stroke-width="2"/><path d="M0 5L24 0V44L0 39Z" fill="#2b579a"/><text x="4" y="28" class="ic-w">W</text></svg></div>
  <div class="tbi"><svg class="tb-ic tb-ic-y" viewBox="0 0 42 40"><rect width="42" height="40" rx="9" fill="#ff0033"/><path d="M17 12L29 20L17 28Z" fill="#fff"/></svg></div>
  <div class="tbi"><svg class="tb-ic tb-ic-g" viewBox="0 0 42 42"><rect width="42" height="42" fill="#0078d4"/><path d="M12 18L19 16V27L12 29Z M20 16L26 14V25L20 27Z M27 14L33 12V22L27 24Z" fill="#7ed321"/></svg></div>
  <div class="tbi"><svg class="tb-ic tb-ic-c" viewBox="0 0 46 46"><circle cx="21" cy="21" r="20" fill="#db4437"/><path d="M3 11L21 21L11 38C2 33 -2 20 3 11Z" fill="#0f9d58"/><path d="M21 21H41C41 28 36 36 27 40L11 38Z" fill="#0f9d58"/><path d="M21 21H41C41 15 38 9 34 6Z" fill="#ffcd40"/><circle cx="21" cy="21" r="9" fill="#fff"/><circle cx="21" cy="21" r="7" fill="#4285f4"/><circle cx="32" cy="32" r="14" fill="#ab47bc"/><circle cx="32" cy="32" r="5" fill="none" stroke="#e9c4f0" stroke-width="2"/></svg></div>
  <div class="tbi tbi-on tbi-cur"><svg class="tb-ic tb-ic-p" viewBox="0 0 32 42"><rect x="0" y="21" width="14" height="21" rx="1" fill="#f2d45c"/><rect x="10" y="10" width="14" height="32" rx="1" fill="#f2c811"/><rect x="18" y="0" width="14" height="42" rx="1" fill="#d9a40e"/></svg></div>
  <div class="tbi tbi-on"><svg class="tb-ic tb-ic-w" viewBox="0 0 42 44"><rect x="14" y="4" width="28" height="36" fill="#fff" stroke="#107c41" stroke-width="1.4"/><path d="M26 4V40M34 4V40M18 12H42M18 20H42M18 28H42" stroke="#107c41" stroke-width="1.6"/><path d="M0 5L24 0V44L0 39Z" fill="#107c41"/><text x="6" y="28" class="ic-w">X</text></svg></div>
  <div class="tb-updown"><svg class="tb-ud" viewBox="0 0 14 10"><path d="M1 8L7 2L13 8" fill="none" stroke="#222" stroke-width="2"/></svg><svg class="tb-ud" viewBox="0 0 14 10"><path d="M1 2L7 8L13 2" fill="none" stroke="#222" stroke-width="2"/></svg></div>
  <div class="tray tr-chev"><svg class="tray-ic1" viewBox="0 0 20 12"><path d="M1 11L10 1L19 11" fill="none" stroke="#222" stroke-width="1.400"/></svg></div>
  <div class="tray tr-meet"><svg class="tray-ic2" viewBox="0 0 20 28"><path d="M3 2C6 0 10 0 13 2M3 26C6 28 10 28 13 26" fill="none" stroke="#333" stroke-width="1.400"/><rect x="1" y="6" width="13" height="16" rx="2" fill="none" stroke="#333" stroke-width="1.400"/><path d="M14 12L19 9V19L14 16" fill="none" stroke="#333" stroke-width="1.400"/></svg></div>
  <div class="tray tr-wifi"><svg class="tray-ic3" viewBox="0 0 24 24"><path d="M1 22C1 11 10 2 22 1M6 22C6 14 12 7 22 6M11 22C11 17 15 12 21 11M16 22C16 19 18 17 20 16" fill="none" stroke="#333" stroke-width="1.200"/><circle cx="21" cy="21" r="1.600" fill="#333"/></svg></div>
  <div class="tray tr-spk"><svg class="tray-ic4" viewBox="0 0 27 26"><path d="M1 9H6L13 2V24L6 17H1Z M17 8C19 11 19 15 17 18M20 5C23 9 23 17 20 21M23 2C27 8 27 18 23 24" fill="none" stroke="#333" stroke-width="1.200"/></svg></div>
  <div class="tray tr-eng">ENG</div>
  <div class="tray tr-clock"><span>12:04 PM</span><span>11/5/2024</span></div>
  <div class="tray tr-note"><svg class="tray-ic5" viewBox="0 0 28 30"><path d="M1 1H27V23H18L14 29L10 23H1Z" fill="#fff" stroke="#222" stroke-width="1.600"/></svg></div>
  <div class="tray tr-copilot"><svg class="tray-ic6" viewBox="0 0 38 38"><path d="M10 2H24L14 26L4 26C1 26 -1 18 2 12C4 6 6 2 10 2Z" fill="#35a6e8"/><path d="M3 10C8 8 10 16 8 26C4 27 1 24 1 20Z" fill="#3ec28f"/><path d="M24 2C30 2 33 14 34 22L24 26L14 26Z" fill="#9a5fd8"/><path d="M24 12H30C35 12 38 22 32 28H18Z" fill="#f06fa8"/><rect x="15" y="24" width="23" height="14" rx="3" fill="#ffc20e"/><text x="18" y="35" class="ic-pre">PRE</text></svg></div>
</div>

<div class="kt kt-1">1</div><div class="kt kt-2 kt-dim">2</div><div class="kt kt-3 kt-dim">3</div>
<div class="kt kt-f">F</div><div class="kt kt-h">H</div><div class="kt kt-i">I</div><div class="kt kt-m">M</div><div class="kt kt-v">V</div><div class="kt kt-o">O</div><div class="kt kt-y2">Y2</div><div class="kt kt-q">Q</div><div class="kt kt-s">S</div><div class="kt kt-zr">ZR</div>
</div>
</body>
</html>
```
FILE: styles.css
```css
* { box-sizing: border-box; }
html, body { margin: 0; padding: 0; }
body { font-family: "Open Sans", "Noto Sans", sans-serif; color: #333; overflow: hidden; }
.app { position: relative; width: 1920px; height: 1080px; display: flex; flex-direction: column; overflow: hidden; background: #f3f2f1; }
i { font-style: normal; }

/* title bar */
.titlebar { height: 60px; background: #3d3b39; display: flex; align-items: center; color: #fff; flex: none; }
.ti-save { width: 26px; height: 26px; margin-left: 29px; }
.ti-undo { width: 23px; height: 26px; margin-left: 28px; }
.ti-redo { width: 23px; height: 26px; margin-left: 27px; }
.wline { fill: none; stroke: #fff; stroke-width: 1.8; }
.gline { fill: none; stroke: #77736f; stroke-width: 1.6; }
.dline { fill: none; stroke: #333; stroke-width: 1.8; }
.doc-title { margin-left: 19px; font-size: 20px; width: 505px; white-space: nowrap; letter-spacing: -.2px; padding-top: 10px; }
.caret { width: 0; height: 0; border-left: 7px solid transparent; border-right: 7px solid transparent; border-top: 7px solid #fff; margin-top: 0; }
.searchbox { margin-left: 103px; width: 700px; height: 42px; background: #d2d2d0; border-radius: 3px; display: flex; align-items: center; padding-left: 31px; font-size: 23px; color: #38675b; gap: 22px; }
.ti-mag { width: 26px; height: 28px; }
.signin { margin-left: 51px; font-size: 21px; width: 83px; padding-top: 2px; }
.avatar { width: 34px; height: 34px; }
.winbtns { margin-left: 57px; display: flex; align-items: center; gap: 59px; padding-top: 3px; }
.win-min { width: 18px; height: 2px; background: #fff; }
.win-max { width: 18px; height: 18px; border: 2px solid #fff; border-radius: 2px; }
.win-close { width: 18px; height: 18px; }

/* ribbon */
.ribbon { height: 220px; flex: none; background: #fafafa; position: relative; z-index: 3; box-shadow: 0 2px 8px rgba(0,0,0,.12); }
.tabs { display: flex; align-items: flex-start; padding: 8px 0 0 37px; height: 63px; gap: 54.500px; font-size: 23.700px; color: #333; }
.tab { line-height: 39px; height: 46px; border-bottom: 5px solid transparent; white-space: nowrap; }
.tab-file { margin-right: 12px; }
.tab.active { border-bottom-color: #117865; }
.share { margin-left: auto; margin-right: 9px; margin-top: -1px; width: 145px; height: 42px; background: #117865; border-radius: 6px; color: #fff; display: flex; align-items: center; padding-left: 11px; font-size: 20px; font-weight: 500; }
.share-ic { width: 30px; height: 28px; margin-right: 14px; }
.share-chev { width: 15px; height: 10px; margin-left: 9px; }

.groups { display: flex; height: 154px; }
.group { position: relative; height: 154px; display: flex; flex-direction: column; border-right: 2px solid #d6d6d6; flex: none; }
.gbody { flex: 1; display: flex; min-height: 0; }
.glabel { height: 24px; text-align: center; font-size: 17px; line-height: 31px; color: #444; }
.g-clip { width: 141px; }
.g-data { width: 538px; }
.g-query { width: 201px; }
.g-insert { width: 670px; }
.g-calc { width: 301px; }
.g-sens { width: 69px; border-right: 0; }

.big { display: flex; flex-direction: column; align-items: center; padding-top: 10px; flex: none; }
.ic-big { height: 53px; margin-bottom: 5px; flex: none; }
.blabel { line-height: 28px; font-size: 19.500px; white-space: nowrap; color: #333; }
.muted .blabel { color: #bdbdbd; }
.chev { display: inline-block; flex: none; width: 7px; height: 7px; border-right: 1.6px solid #333; border-bottom: 1.6px solid #333; transform: rotate(45deg) translate(-2px, -2px); margin-left: 7px; }
.chev.ml { margin-left: 6px; }
.big-chev { margin: 0; transform: rotate(45deg); width: 9px; height: 9px; }

.clip-body { padding-left: 24px; gap: 18px; }
.big-paste { width: 50px; }
.clip-tools { display: flex; flex-direction: column; padding-top: 7px; gap: 14px; width: 28px; }
.ic-s { width: 28px; height: 28px; }

.data-body { padding-left: 19px; gap: 16px; }
.big-get { width: 60px; }
.smallcol { display: flex; flex-direction: column; font-size: 20px; }
.row { height: 42px; display: flex; align-items: center; gap: 6px; white-space: nowrap; }
.ic-row { width: 25px; height: 30px; flex: none; }
.ic-w { width: 28px; }
.ic-x { font: 700 12px "Liberation Sans", sans-serif; fill: #fff; }
.ic-a { font: 15px "Open Sans", sans-serif; fill: #1a78c2; }
.ic-123 { font: 10.5px "Open Sans", sans-serif; fill: #1a78c2; }
.ic-fx { font: italic 28px "Liberation Serif", serif; fill: #bbb; }
.ic-dax { font: 700 11px "Open Sans", sans-serif; fill: #808080; }
.ic-pre { font: 700 8px "Liberation Sans", sans-serif; fill: #333; }
svg .ic-w { font: 700 15px "Liberation Sans", sans-serif; fill: #fff; }

.query-body { padding-left: 18px; gap: 7px; }
.big-trans { width: 92px; }
.big-ref { width: 67px; }

.insert-body { padding-left: 23px; gap: 16px; }
.gallery { margin-top: 16px; width: 442px; height: 108px; background: #fff; border: 2px solid #8a8a8a; display: flex; flex: none; }
.gal-grid { width: 412px; display: grid; grid-template-columns: repeat(9, 45.500px); grid-auto-rows: 52px; padding-left: 1px; align-items: center; justify-items: center; border-right: 2px solid #8a8a8a; }
.gi { width: 28px; height: 28px; }
.gi .d { fill: none; stroke: #444; stroke-width: 2; }
.gi .b { fill: #7db9ec; stroke: #0f6cbd; stroke-width: 2; }
.gi .g { fill: #bbb; stroke: #888; stroke-width: 2; }
.gi .w { fill: #fff; stroke: #444; stroke-width: 1.5; }
.gi .w2 { fill: #fff; stroke: #444; stroke-width: 2; }
.gi .w3 { fill: #fff; stroke: #888; stroke-width: 1.5; }
.gal-more { flex: 1; display: flex; align-items: center; justify-content: center; padding-bottom: 6px; background: #fafafa; }
.col-c { flex: 1; }
.col-c .row { gap: 8px; }
.col-a { width: 216px; }

.calc-body { padding-left: 16px; }
.big-nvc { width: 100px; }
.big-nm { width: 78px; margin-left: 7px; }
.big-qm { width: 80px; margin-left: 4px; }
.sens-body { padding-left: 19px; padding-top: 68px; }
.sens-text { color: #bdbdbd; width: 17px; overflow: hidden; }
.sens-label { text-align: left; padding-left: 26px; }
.collapse { position: absolute; right: 9px; bottom: 10px; width: 14px; height: 10px; }

/* main */
.mainrow { flex: none; height: 688px; display: flex; }
.leftnav { width: 71px; background: #f3f2f1; border-right: 1px solid #d8d8d8; flex: none; }
.ln-item { height: 70px; display: flex; align-items: center; justify-content: center; position: relative; padding-left: 2px; }
.ln-active::before { content: ""; position: absolute; left: 0; top: 0; width: 5px; height: 70px; background: #117865; }
.ln-ic { width: 24px; height: 24px; }
.ln-ic2 { width: 29px; height: 27px; }
.ln-ic3 { width: 33px; height: 33px; }
.ln-ic4 { width: 32px; height: 30px; }

.centercol { flex: 1; display: flex; flex-direction: column; min-width: 0; }
.workspace { height: 627px; background: #fff; position: relative; display: flex; padding-left: 321px; }
.canvas { width: 1094px; height: 616px; margin-top: -1px; border: 3px dotted #444; position: relative; flex: none; }
.filters { position: absolute; right: 0; top: 0; bottom: 0; width: 57px; background: #fff; border-left: 2px solid #aaa; display: flex; flex-direction: column; align-items: center; padding-top: 22px; }
.f-chev { width: 22px; height: 22px; }
.f-funnel { width: 20px; height: 22px; margin-top: 28px; margin-left: 4px; }
.f-text { writing-mode: vertical-rl; font-size: 25.500px; font-weight: 600; color: #222; margin-top: 12px; line-height: 30px; }

.tooltip { position: absolute; left: 1189px; top: 10px; width: 527px; height: 83px; background: #fff; border-radius: 3px; padding: 15px 13px 0; font-size: 20px; line-height: 28px; color: #333; box-shadow: 0 4px 24px rgba(0,0,0,.18); z-index: 5; }
.tooltip::after { content: ""; position: absolute; right: -11px; top: 30px; width: 22px; height: 22px; background: #fff; transform: rotate(45deg); }

/* report */
.pbtitle { position: absolute; left: 1px; top: -2px; width: 421px; height: 82px; border: 3px solid #111; border-radius: 3px; background: #fff; z-index: 1; }
.pbtitle-top { height: 22px; background: #eb8a60; }
.pbtitle-text { font: 500 31.500px "Roboto", sans-serif; color: #111; text-align: center; line-height: 40px; -webkit-text-stroke: .5px #111; }
.slicer { position: absolute; left: 481px; top: -2px; width: 609px; height: 97px; background: #118dff; }
.slicer-head { height: 25px; background: #eb8a60; text-align: center; font: 700 16px "Roboto", sans-serif; color: #222; line-height: 24px; }
.slicer-grid { display: grid; grid-template-columns: 195px 1fr; column-gap: 7px; row-gap: 7px; padding: 0 0 0 4px; }
.pill { height: 31px; background: #252423; border-radius: 16px; color: #fff; font: 700 12px "Roboto", sans-serif; display: flex; align-items: center; padding: 6px 0 0 12px; }

.kpi { position: absolute; top: 96px; background: #fff; border: 4px solid #050505; display: flex; flex-direction: column; }
.kpi-head { height: 27px; flex: none; background: #eb8a60; text-align: center; font: 500 20px "Roboto", sans-serif; color: #111; line-height: 24px; white-space: nowrap; overflow: hidden; padding-left: 5px; }
.k-tight { letter-spacing: -.4px; }
.kpi-head2 { height: 50px; line-height: 23px; white-space: normal; padding: 1px 16px 0 24px; }
.kpi-val { flex: 1; display: flex; align-items: center; justify-content: center; font: 500 56px "Roboto", sans-serif; color: #7abdff; letter-spacing: 1px; padding: 18px 0 5px; transform: scaleX(.91); }
.val-low { padding: 15px 0 0; }
.val-s { padding: 17px 0 0; }
.k1 { left: 61px; width: 169px; height: 135px; }
.k2 { left: 230px; width: 167px; height: 134px; }
.k3 { left: 397px; width: 168px; height: 139px; }
.k4 { left: 565px; width: 168px; height: 137px; }
.k5 { left: 733px; width: 155px; height: 137px; }

.vis { position: absolute; background: #f4c4b0; border: 3px solid #1a6db5; border-radius: 24px; overflow: hidden; box-shadow: inset 0 -6px 10px rgba(80,80,110,.25); }
.vis svg { display: block; }
.vis-title { height: 20px; background: #fff; text-align: center; font: 13.500px/18px "Roboto", sans-serif; color: #222; white-space: nowrap; letter-spacing: .35px; padding-left: 6px; }
.v3 .vis-title, .v4 .vis-title { height: 21px; line-height: 18px; }
.vt-2 { height: 36px; white-space: normal; line-height: 16px; padding: 0 6px 0 12px; }
.v1 { left: 46px; top: 233px; width: 206px; height: 180px; }
.v2 { left: 255px; top: 233px; width: 213px; height: 180px; }
.v3 { left: 470px; top: 236px; width: 213px; height: 177px; }
.v4 { left: 685px; top: 236px; width: 214px; height: 177px; }
.v5 { left: 44px; top: 415px; width: 210px; height: 195px; }
.v6 { left: 256px; top: 415px; width: 212px; height: 195px; }
.v7 { left: 470px; top: 415px; width: 212px; height: 193px; }

.ax { font: 11px "Roboto", sans-serif; fill: #6b6560; }
.ax-w { font: 9.500px "Roboto", sans-serif; fill: #6b6560; letter-spacing: .3px; text-anchor: end; }
.ax-b { font: 700 8px "Roboto", sans-serif; fill: #6b6560; letter-spacing: .7px; }
.ax-t { font: 500 10px "Roboto", sans-serif; fill: #5c5650; }
.ax-t2 { font: 700 11px "Roboto", sans-serif; fill: #5c5650; }
.ax-o { font-size: 10.500px; fill: #8a8480; }
.c { text-anchor: middle; }
.e { text-anchor: end; }
.line { fill: none; stroke: #118dff; stroke-width: 2.500; }
.tm { font: 500 11px "Roboto", sans-serif; fill: #fff; }
.map-b { font: 700 9.500px "Roboto", sans-serif; fill: #222; }
.map-o { font: 10.500px "Roboto", sans-serif; fill: #3a64c8; }
.map-c { font: 7.500px "Roboto", sans-serif; fill: #555; }
.map-l { fill: #3a64c8; text-decoration: underline; }
.map-i { font: 10px "Roboto", sans-serif; fill: #3a64c8; }

/* page bar */
.pagebar { height: 61px; background: #f3f2f1; display: flex; align-items: stretch; border-bottom: 2px solid #dedddc; }
.pb-device { width: 42px; margin-left: 18px; display: flex; justify-content: center; padding-top: 12px; position: relative; }
.pb-phone { margin-left: 35px; padding-top: 8px; }
.pb-on::after { content: ""; position: absolute; left: 0; right: 0; top: 48px; height: 5px; background: #117865; border-radius: 3px; }
.dev-ic { width: 34px; height: 26px; }
.ph-ic { width: 22px; height: 36px; }
.pb-arrows { width: 87px; display: flex; align-items: center; justify-content: center; gap: 33px; padding-left: 14px; }
.arr-l { border-right: 7px solid #c8c6c4; border-top: 9px solid transparent; border-bottom: 9px solid transparent; }
.arr-r { border-left: 7px solid #c8c6c4; border-top: 9px solid transparent; border-bottom: 9px solid transparent; }
.ptab { width: 133px; background: #fff; display: flex; align-items: center; justify-content: center; font-size: 20px; color: #333; border-bottom: 7px solid #fff; padding-top: 8px; }
.ptab-on { width: 131px; border-left: 1px solid #bbb; border-right: 1px solid #ddd; border-bottom-color: #117865; font-weight: 600; color: #222; padding-left: 3px; }
.ptab-add { width: 68px; background: #117865; color: #fff; font: 700 38px/1 "Liberation Sans", sans-serif; display: flex; align-items: center; justify-content: center; }

.rightnav { width: 55px; flex: none; background: #f8f7f6; border-left: 1px solid #dedddc; display: flex; flex-direction: column; align-items: center; padding: 68px 0 0 3px; gap: 23px; position: relative; }
.rn-ic { width: 32px; height: 34px; }
.rn-plus { width: 30px; height: 30px; }
.rn-gear { position: absolute; left: 0; right: 0; bottom: 0; height: 56px; border-top: 1px solid #dedddc; display: flex; align-items: center; justify-content: center; padding-left: 4px; }
.gear { width: 36px; height: 34px; }

/* status */
.statusbar { height: 40px; flex: none; background: #f3f2f1; display: flex; align-items: center; font-size: 20px; color: #555; position: relative; padding-top: 3px; }
.st-page { margin-left: 7px; width: 1203.500px; }
.st-zoom { display: flex; align-items: center; width: 241px; }
.z-minus { font-weight: 700; width: 19px; text-align: left; margin-left: 3px; margin-top: -4px; }
.z-slider { width: 176px; height: 2px; background: #666; position: relative; }
.z-thumb { position: absolute; left: 35px; top: -8px; width: 7px; height: 18px; background: #605e5c; }
.z-tick { position: absolute; left: 87px; top: -4px; width: 1px; height: 10px; background: #666; }
.z-plus { margin-left: 8px; font-weight: 700; font-size: 24px; margin-top: -4px; }
.st-pct { width: 76px; margin-left: 0; }
.st-fit { width: 28px; height: 26px; margin-right: 26px; }
.st-update { white-space: nowrap; font-size: 20px; }

/* taskbar */
.taskbar { height: 72px; flex: none; background: #eeeeee; display: flex; align-items: stretch; position: relative; border-top: 2px solid #fff; }
.taskbar::before { content: ""; position: absolute; left: 1076px; right: 0; top: -2px; height: 2px; background: #111; }
.tb-start { width: 85px; display: flex; align-items: center; justify-content: center; padding-right: 1px; }
.winlogo { width: 24px; height: 24px; }
.tb-search { width: 503px; height: 69px; margin-top: 1px; background: #fff; border: 2px solid #ccc; display: flex; align-items: center; padding-left: 18px; position: relative; font-size: 24px; color: #222; }
.tb-mag { width: 33px; height: 31px; margin-right: 22px; flex: none; }
.tb-stext { white-space: nowrap; letter-spacing: -.2px; padding-top: 1px; }
.tb-dune { position: absolute; right: 4px; top: 5px; width: 124px; height: 56px; }
.tbi { width: 70px; position: relative; display: flex; align-items: center; justify-content: center; padding-bottom: 5px; }
.tbi-tv { width: 80px; margin-left: 5px; }
.tbi-mon { width: 74px; }
.tbi-on::after { content: ""; position: absolute; left: 8px; right: 8px; bottom: 0; height: 4px; background: #0078d4; }
.tbi-cur { background: #f8f8f8; }
.tbi-cur::after { left: 0; right: 0; }
.tb-ic { width: 30px; height: 34px; }
.tb-ic-w { width: 40px; height: 42px; }
.tb-ic-y { width: 41px; height: 38px; }
.tb-ic-g { width: 42px; height: 42px; }
.tb-ic-c { width: 46px; height: 46px; }
.tb-ic-p { width: 31px; height: 42px; }
.tb-badge { position: absolute; left: 38px; top: 35px; width: 30px; height: 27px; border-radius: 50%; background: #ccc; border: 1px solid #888; color: #111; font: 15px/25px "Open Sans", sans-serif; text-align: center; }
.tb-updown { width: 40px; display: flex; flex-direction: column; align-items: center; justify-content: center; gap: 30px; }
.tb-ud { width: 14px; height: 10px; }
.tray { display: flex; align-items: center; justify-content: center; color: #222; }
.tr-chev { width: 28px; }
.tr-meet { width: 60px; }
.tr-wifi { width: 26px; }
.tr-spk { width: 54px; }
.tr-eng { width: 52px; font-size: 19px; }
.tr-clock { width: 128px; flex-direction: column; font-size: 19.500px; gap: 6px; line-height: 26px; }
.tr-note { width: 54px; }
.tr-copilot { width: 88px; }
.tray-ic1 { width: 20px; height: 12px; }
.tray-ic2 { width: 20px; height: 28px; }
.tray-ic3 { width: 24px; height: 24px; }
.tray-ic4 { width: 27px; height: 26px; }
.tray-ic5 { width: 28px; height: 30px; }
.tray-ic6 { width: 38px; height: 38px; }

/* key tips */
.kt { position: absolute; z-index: 10; height: 32px; width: 30px; background: #111; color: #fff; border-radius: 3px; display: flex; align-items: center; justify-content: center; font-size: 22px; line-height: 1; }
.kt-dim { background: rgba(60,60,60,.65); }
.kt-1 { left: 28px; top: 70px; }
.kt-2 { left: 80px; top: 70px; }
.kt-3 { left: 130px; top: 70px; }
.kt-f { left: 49px; top: 102px; }
.kt-h { left: 160px; top: 102px; }
.kt-i { left: 278px; top: 102px; }
.kt-m { left: 415px; top: 102px; width: 32px; }
.kt-v { left: 549px; top: 102px; }
.kt-o { left: 679px; top: 102px; }
.kt-y2 { left: 804px; top: 102px; width: 37px; }
.kt-q { left: 1167px; top: 51px; }
.kt-s { left: 1822px; top: 123px; }
.kt-zr { left: 1868px; top: 294px; width: 40px; }
```
